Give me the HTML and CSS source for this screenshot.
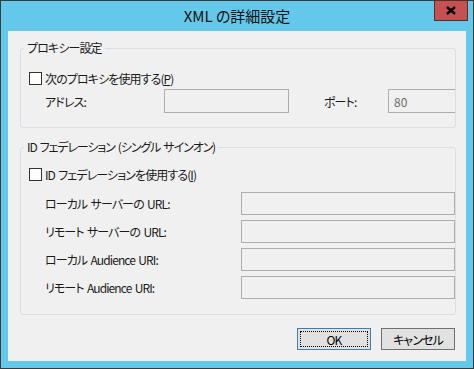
FILE: index.html
```html
<!DOCTYPE html>
<html lang="ja">
<head>
    <meta charset="UTF-8">
    <title>XML の詳細設定</title>
    <link rel="stylesheet" href="styles.css">
</head>
<body>
    <div class="window">
        <div class="title-bar">
            <span class="title">XML の詳細設定</span>
            <button class="close-btn" type="button" aria-label="閉じる">
                <svg class="close-icon" width="10" height="9" viewBox="0 0 10 9">
                    <path d="M1 1 L9 8 M9 1 L1 8" stroke="#000" stroke-width="2.4" fill="none"/>
                </svg>
            </button>
        </div>

        <div class="client">
            <!-- プロキシー -->
            <fieldset class="group">
                <legend>プロキシー設定</legend>
                <div class="group-body proxy-body">
                    <label class="check-row">
                        <span class="checkbox"></span>
                        <span>次のプロキシを使用する(<u>P</u>)</span>
                    </label>
                    <div class="proxy-row">
                        <span class="proxy-label">アドレス:</span>
                        <input class="field address-field" type="text" disabled>
                        <span class="port-label">ポート:</span>
                        <input class="field port-field" type="text" value="80" disabled>
                    </div>
                </div>
            </fieldset>

            <!-- ID フェデレーション -->
            <fieldset class="group federation">
                <legend>ID フェデレーション (シングル サインオン)</legend>
                <div class="group-body federation-body">
                    <label class="check-row">
                        <span class="checkbox"></span>
                        <span>ID フェデレーションを使用する(<u>I</u>)</span>
                    </label>
                    <div class="url-grid">
                        <span class="url-label">ローカル サーバーの URL:</span>
                        <input class="field" type="text" disabled>
                        <span class="url-label">リモート サーバーの URL:</span>
                        <input class="field" type="text" disabled>
                        <span class="url-label">ローカル Audience URI:</span>
                        <input class="field" type="text" disabled>
                        <span class="url-label">リモート Audience URI:</span>
                        <input class="field" type="text" disabled>
                    </div>
                </div>
            </fieldset>

            <div class="buttons">
                <button class="btn btn-default" type="button">OK</button>
                <button class="btn" type="button">キャンセル</button>
            </div>
        </div>
    </div>
</body>
</html>
```

FILE: styles.css
```css
* {
    box-sizing: border-box;
}
body {
    margin: 0;
    font-family: "Noto Sans CJK JP", "Noto Sans", sans-serif;
    font-size: 12px;
    color: #000;
}
.window {
    width: 474px;
    height: 369px;
    background-color: #63c8e9;
    border: 1px solid #3a3a3a;
    padding: 0 7px 7px 7px;
    display: flex;
    flex-direction: column;
}
.title-bar {
    position: relative;
    height: 30px;
    margin: 0 -7px;
    text-align: center;
    line-height: 29px;
}
.title {
    font-size: 15px;
    color: #111;
    font-feature-settings: "palt";
}
.close-btn {
    position: absolute;
    top: -1px;
    right: 5px;
    width: 34px;
    height: 21px;
    padding: 0;
    border: 1px solid #4b3232;
    background-color: #c75050;
    display: flex;
    align-items: center;
    justify-content: center;
}
.close-icon {
    display: block;
}
.client {
    flex: 1;
    background-color: #f0f0f0;
    padding: 9px 10px 0 12px;
    display: flex;
    flex-direction: column;
    font-feature-settings: "palt";
    letter-spacing: -0.9px;
    word-spacing: 1.5px;
    color: #1a1a1a;
}
.group {
    margin: 0;
    padding: 0;
    min-width: 0;
    border: 1px solid #d8e0e6;
    border-radius: 3px;
}
.group legend {
    margin-left: 3px;
    padding: 0 3px;
    line-height: 16px;
}
.federation legend {
    letter-spacing: -1.1px;
}
.federation {
    margin-top: 11px;
}
.proxy-body {
    padding: 14px 0 14px 0;
}
.federation-body {
    padding: 11px 0 15px 0;
}
.check-row {
    display: flex;
    align-items: center;
    height: 16px;
    margin-left: 8px;
}
.checkbox {
    width: 13px;
    height: 13px;
    border: 1px solid #333;
    background-color: #fff;
    margin-right: 3px;
}
.check-row u {
    text-decoration: underline;
}
.proxy-row {
    display: flex;
    align-items: center;
    margin-top: 3px;
    padding-left: 24px;
}
.proxy-label {
    width: 119px;
}
.port-label {
    margin-left: 35px;
    width: 64px;
}
.field {
    height: 24px;
    border: 1px solid #adadad;
    background-color: #f0f0f0;
    font-family: inherit;
    font-size: 12px;
    letter-spacing: 0;
    color: #6d6d6d;
    padding: 0 5px;
    margin: 0;
}
.address-field {
    width: 125px;
}
.port-field {
    flex: 1;
    min-width: 0;
    border-right: none;
}
.url-grid {
    display: grid;
    grid-template-columns: 196px 1fr;
    row-gap: 5px;
    align-items: center;
    margin-top: 10px;
    padding-left: 24px;
}
.url-grid .field {
    height: 23px;
    width: 100%;
}
.buttons {
    display: flex;
    justify-content: flex-end;
    gap: 10px;
    margin-top: 13px;
    margin-right: 1px;
}
.btn {
    width: 74px;
    height: 22px;
    padding: 0;
    border: 1px solid #707070;
    background-color: #e1e1e1;
    font-family: inherit;
    font-size: 12px;
    letter-spacing: -0.9px;
    color: #000;
    font-feature-settings: "palt";
}
.btn-default {
    border-color: #3c7fb1;
    outline: 1px dotted #000;
    outline-offset: -4px;
}
```
